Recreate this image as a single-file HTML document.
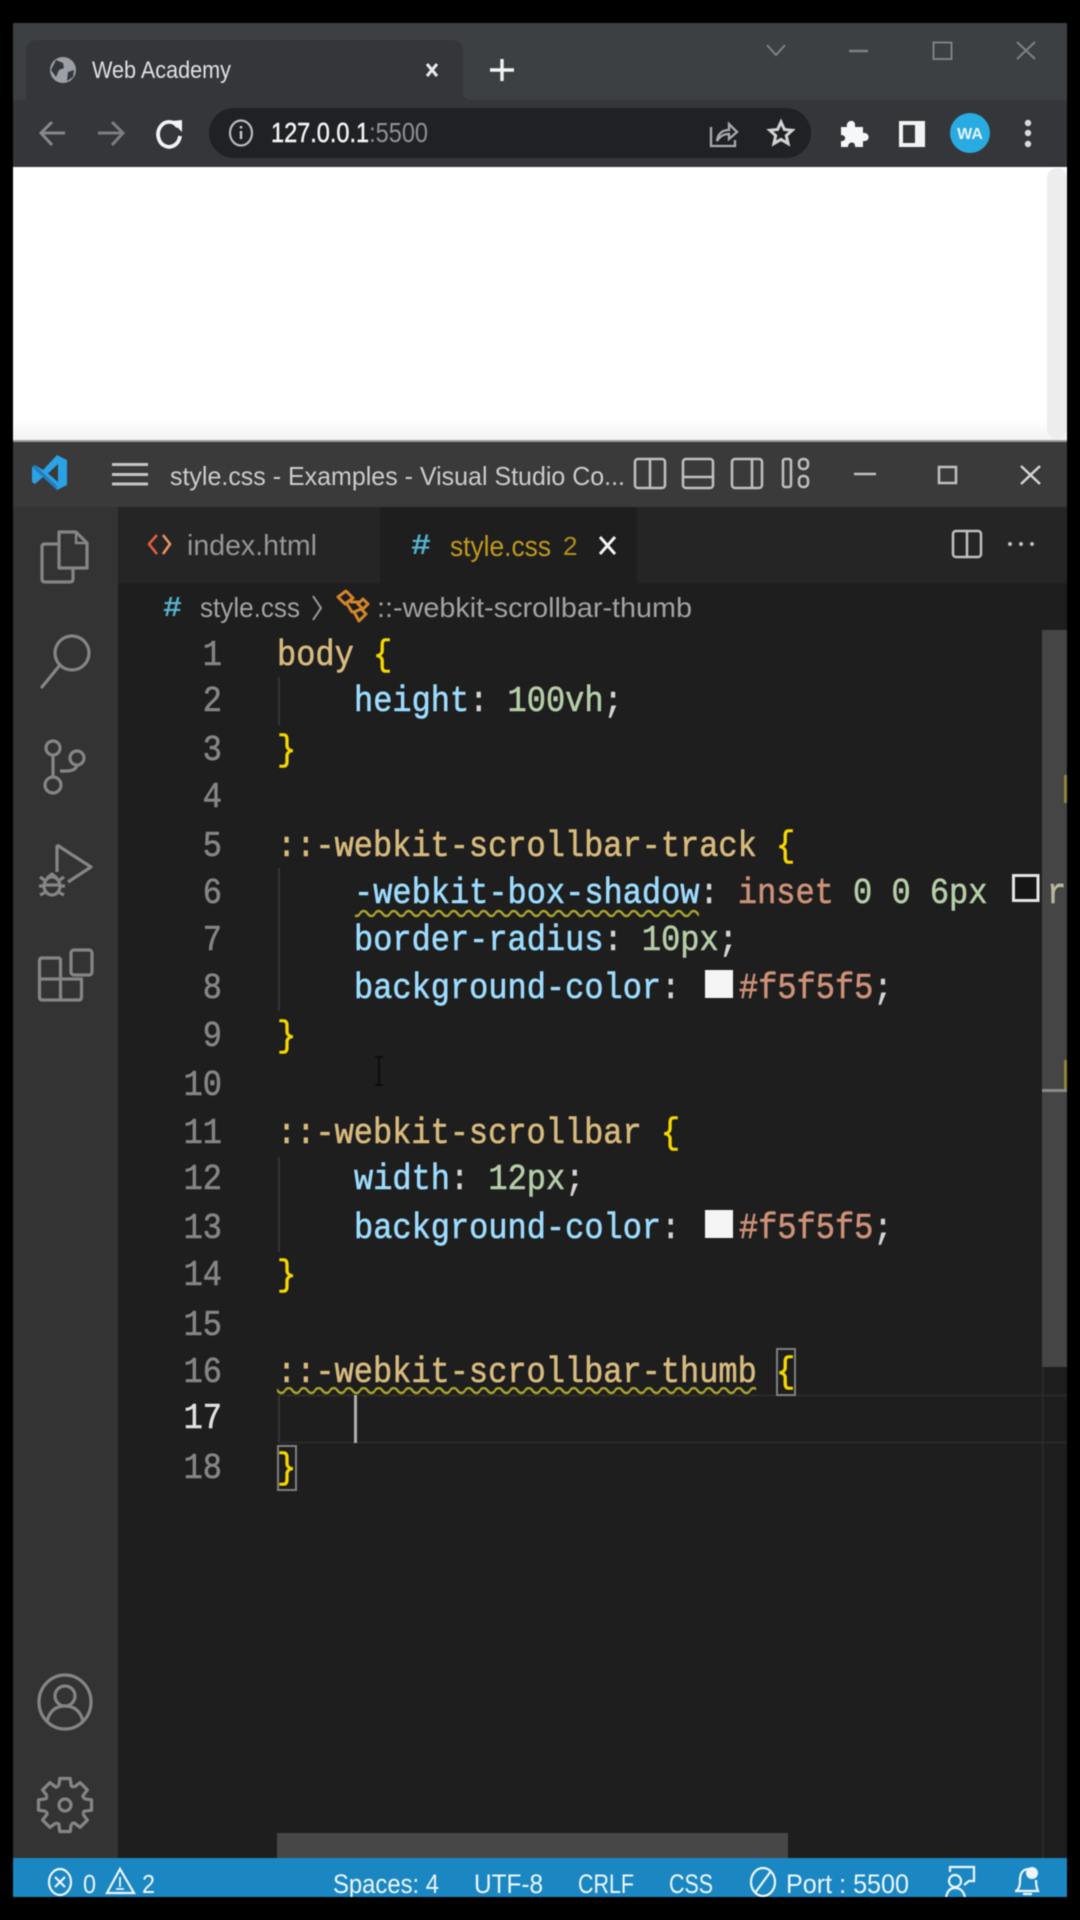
<!DOCTYPE html>
<html><head><meta charset="utf-8"><title>Web Academy</title>
<style>
html,body{margin:0;padding:0;background:#000;width:1080px;height:1920px;overflow:hidden}
svg{display:block;filter:blur(.55px)}
text{font-family:"Liberation Sans",sans-serif}
.c text,text.m{font-family:"Liberation Mono",monospace;font-size:32px;white-space:pre;stroke-width:.55px}
.n{fill:#858585;stroke:#858585;text-anchor:end}
.s{fill:#d7ba7d;stroke:#d7ba7d}.p{fill:#9cdcfe;stroke:#9cdcfe}.v{fill:#b5cea8;stroke:#b5cea8}.b{fill:#f5d800;stroke:#f5d800}.h{fill:#ce9178;stroke:#ce9178}.w{fill:#d4d4d4;stroke:#d4d4d4}
.t{stroke-width:.35px}
</style></head><body>
<svg width="1080" height="1920" viewBox="0 0 1080 1920" xmlns="http://www.w3.org/2000/svg">
<defs>
<pattern id="sq" width="15" height="9" patternUnits="userSpaceOnUse"><path d="M-1 5.500C2 1 5 1 7.500 4.500C10 8 13 8 16 3.500" fill="none" stroke="#aaa52c" stroke-width="2.400"/></pattern>
<clipPath id="ed"><rect x="118" y="507" width="949" height="1351"/></clipPath>
<clipPath id="st"><rect x="13" y="1858" width="1054" height="39"/></clipPath>
<linearGradient id="pg" x1="0" y1="0" x2="0" y2="1"><stop offset="0" stop-color="#fff"/><stop offset="1" stop-color="#f2f2f2"/></linearGradient>
</defs>
<rect width="1080" height="1920" fill="#000"/>

<!-- Chrome -->
<rect x="13" y="23" width="1054" height="78" fill="#3c4043"/>
<path d="M26 100V52q0-12 12-12H451q12 0 12 12V92q0 8 10 8Z" fill="#35363a"/>
<rect x="13" y="100" width="1054" height="67" fill="#35363a"/>
<circle cx="63" cy="70" r="13" fill="#9aa0a6"/>
<path d="M56 60l7 3 1 5-5 2-3 7-5-7zM68 72l6-2-1 7-6 4z" fill="#35363a"/>
<text x="92" y="78" font-size="24" fill="#dfe1e5" textLength="139" lengthAdjust="spacingAndGlyphs">Web Academy</text>
<path d="M427 64l10 12M437 64l-10 12" stroke="#e8eaed" stroke-width="3" fill="none"/>
<path d="M502 59v22M490 70h24" stroke="#f1f3f4" stroke-width="3.400" fill="none"/>
<g stroke="#7d8185" fill="none" stroke-width="2">
<path d="M767 45l9 10 9-10"/><path d="M849 51h19" stroke-width="2.500"/><rect x="933.500" y="42.500" width="18" height="16.500"/><path d="M1017 42l18 17M1035 42l-18 17"/>
</g>
<g stroke="#84878b" fill="none" stroke-width="3">
<path d="M65 133H42M52 122L41 133L52 145"/><path d="M98 133H122M112 122L123 133L112 145" stroke="#7a7d81"/>
</g>
<path d="M178 127a11 12.500 0 1 0 2 9" fill="none" stroke="#f1f3f4" stroke-width="3.800"/><path d="M171 121l11-1v12z" fill="#f1f3f4"/>
<rect x="209" y="108" width="602" height="50" rx="25" fill="#202124"/>
<ellipse cx="241" cy="133" rx="11" ry="12.500" fill="none" stroke="#b8babd" stroke-width="2.200"/><path d="M241 131v8M241 126v2.500" stroke="#c8cacc" stroke-width="2.400"/>
<text x="271" y="142" font-size="28" textLength="157" lengthAdjust="spacingAndGlyphs"><tspan fill="#f1f3f4" stroke="#f1f3f4" stroke-width=".5">127.0.0.1</tspan><tspan fill="#8e9194">:5500</tspan></text>
<g fill="none" stroke="#a8abae" stroke-width="2.300">
<path d="M711 127v19h24v-6"/><path d="M717 141c1-8 6-11 12-11v-6l8 8-8 7v-5c-5 0-9 2-12 7z"/>
<path d="M781 122l3.400 7.500 7.800.8-5.900 5.300 1.800 8-7.100-4.200-7.100 4.200 1.800-8-5.900-5.300 7.800-.8z" stroke="#d0d2d4" stroke-width="3"/>
</g>
<path d="M843 129h6c-2-7 9-9 8-1l0 1h8v6c7-1 8 9 0 8v6h-8c1-6-7-6-7 0h-7v-6c5 1 6-6 0-6z" fill="#f6f7f8" transform="translate(-2,-2)"/>
<rect x="899" y="121" width="26" height="26" fill="#f1f3f4"/><rect x="903" y="125" width="12" height="18" fill="#35363a"/>
<circle cx="970" cy="133" r="20" fill="#29abe2"/>
<text x="970" y="139" font-size="16" font-weight="700" fill="#e8f5fb" text-anchor="middle">WA</text>
<g fill="#d8dadc"><circle cx="1028" cy="123" r="3.200"/><circle cx="1028" cy="133" r="3.200"/><circle cx="1028" cy="144" r="3.200"/></g>

<!-- page -->
<rect x="13" y="167" width="1054" height="274" fill="#fff"/>
<rect x="13" y="420" width="1054" height="21" fill="url(#pg)"/>
<rect x="1047" y="168" width="20" height="271" rx="10" fill="#ededed"/>
<rect x="13" y="440" width="1054" height="2" fill="#9a9a9a"/>

<!-- VS Code frame -->
<rect x="13" y="442" width="1054" height="65" fill="#3a3a3a"/>
<rect x="13" y="507" width="105" height="1351" fill="#333333"/>
<rect x="118" y="507" width="949" height="76" fill="#252526"/>
<rect x="118" y="583" width="949" height="1275" fill="#1e1e1e"/>
<rect x="380" y="507" width="257" height="76" fill="#1e1e1e"/>

<!-- title bar -->
<path d="M57 455L67 460V485L57 490L43 477L35 484L32 482V467L35 465L43 470Z" fill="#2aa2e3"/>
<path d="M58 464L48 473.500L58 482Z" fill="#3a3a3a"/>
<path d="M32 467L35 465L57 486V490Z" fill="#1f7fc0"/>
<path d="M112 464.500h36M112 474.500h36M112 484h36" stroke="#c5c5c5" stroke-width="3"/>
<text x="170" y="485" font-size="26" fill="#cccccc" textLength="455" lengthAdjust="spacingAndGlyphs">style.css - Examples - Visual Studio Co...</text>
<g fill="none" stroke="#c0c0c0" stroke-width="2.500">
<rect x="635" y="459" width="30" height="29" rx="3"/><path d="M650 459v29"/>
<rect x="683" y="459" width="30" height="29" rx="3"/><path d="M683 477h30"/>
<rect x="732" y="459" width="30" height="29" rx="3"/><path d="M752 459v29"/>
<rect x="783" y="459" width="8" height="28" rx="2"/><rect x="799" y="459" width="9" height="10" rx="4"/><rect x="799" y="476" width="9" height="11" rx="4"/>
<path d="M854 474h22"/><rect x="939" y="467" width="17" height="16"/><path d="M1021 466l19 18M1040 466l-19 18" stroke="#d4d4d4"/>
</g>

<!-- tabs -->
<path d="M157 535l-8 9 8 10" fill="none" stroke="#e2603c" stroke-width="2.600"/><path d="M163 535l7 9-7 10" fill="none" stroke="#e8955f" stroke-width="2.600"/>
<text x="187" y="555" font-size="29" fill="#979797" textLength="130" lengthAdjust="spacingAndGlyphs">index.html</text>
<text x="411" y="554" font-size="30" font-weight="700" fill="#55b4cf" textLength="20" lengthAdjust="spacingAndGlyphs" style="font-family:'Liberation Mono',monospace">#</text>
<text x="450" y="556" font-size="29" fill="#c29a1d" textLength="101" lengthAdjust="spacingAndGlyphs">style.css</text>
<text x="563" y="555" font-size="26" fill="#b38f1c">2</text>
<path d="M600 537l15 17M615 537l-15 17" stroke="#f2f2f2" stroke-width="3" fill="none"/>
<rect x="953" y="531" width="28" height="26" rx="3" fill="none" stroke="#c0c0c0" stroke-width="2.500"/><path d="M967 531v26" stroke="#c0c0c0" stroke-width="2.500"/>
<g fill="#c0c0c0"><circle cx="1010" cy="544" r="2"/><circle cx="1021" cy="544" r="2"/><circle cx="1032" cy="544" r="2"/></g>

<!-- breadcrumbs -->
<text x="163" y="616" font-size="29" font-weight="700" fill="#55b4cf" textLength="19" lengthAdjust="spacingAndGlyphs" style="font-family:'Liberation Mono',monospace">#</text>
<text x="200" y="617" font-size="28" fill="#a3a3a3" textLength="100" lengthAdjust="spacingAndGlyphs">style.css</text>
<path d="M313 596l8 12-8 12" fill="none" stroke="#9a9a9a" stroke-width="2"/>
<g fill="none" stroke="#d4852b" stroke-width="3" stroke-linejoin="round">
<path d="M338 597L346 591L353 598L345 604Z"/><path d="M358 604L363 599L368 604L363 609Z"/><path d="M350 602H359M347 604L352 612H356"/><path d="M354 612L361 609L366 614L359 621Z"/>
</g>
<text x="377" y="617" font-size="28" fill="#a3a3a3" textLength="315" lengthAdjust="spacingAndGlyphs">::-webkit-scrollbar-thumb</text>

<!-- scrollbars / rulers -->
<rect x="1042" y="630" width="25" height="737" fill="#454545"/>
<rect x="1042" y="1367" width="1.500" height="491" fill="#2c2c2c"/>
<rect x="1064" y="775" width="3" height="28" fill="#8f8436"/>
<rect x="1064" y="1060" width="3" height="29" fill="#8f8436"/>
<rect x="1042" y="1089" width="25" height="3" fill="#8a8a8a"/>
<rect x="277" y="1833" width="511" height="25" fill="#474747"/>

<!-- current line -->
<path d="M279 1395.500H1067M279 1442.500H1067" stroke="#292929" stroke-width="2"/>
<!-- indent guides -->
<path d="M279 677V725M279 868V1011M279 1157V1252M279 1395V1443" stroke="#3c3c3c" stroke-width="1.500"/>

<!-- line numbers -->
<g class="c">
<text class="n" transform="translate(222,665) scale(1,1.130)">1</text>
<text class="n" transform="translate(222,711) scale(1,1.130)">2</text>
<text class="n" transform="translate(222,760) scale(1,1.130)">3</text>
<text class="n" transform="translate(222,807) scale(1,1.130)">4</text>
<text class="n" transform="translate(222,856) scale(1,1.130)">5</text>
<text class="n" transform="translate(222,903) scale(1,1.130)">6</text>
<text class="n" transform="translate(222,950) scale(1,1.130)">7</text>
<text class="n" transform="translate(222,998) scale(1,1.130)">8</text>
<text class="n" transform="translate(222,1046) scale(1,1.130)">9</text>
<text class="n" transform="translate(222,1095) scale(1,1.130)">10</text>
<text class="n" transform="translate(222,1143) scale(1,1.130)">11</text>
<text class="n" transform="translate(222,1189) scale(1,1.130)">12</text>
<text class="n" transform="translate(222,1238) scale(1,1.130)">13</text>
<text class="n" transform="translate(222,1285) scale(1,1.130)">14</text>
<text class="n" transform="translate(222,1335) scale(1,1.130)">15</text>
<text class="n" transform="translate(222,1382) scale(1,1.130)">16</text>
<text class="n" transform="translate(222,1428) scale(1,1.130)" style="fill:#e0e0e0;stroke:#e0e0e0">17</text>
<text class="n" transform="translate(222,1478) scale(1,1.130)">18</text>
</g>

<!-- code -->
<g class="c" clip-path="url(#ed)">
<text transform="translate(277,665) scale(1,1.130)"><tspan class="s">body</tspan> <tspan class="b">{</tspan></text>
<text transform="translate(354,711) scale(1,1.130)"><tspan class="p">height</tspan><tspan class="w">: </tspan><tspan class="v">100vh</tspan><tspan class="w">;</tspan></text>
<text transform="translate(277,760) scale(1,1.130)"><tspan class="b">}</tspan></text>
<text transform="translate(277,856) scale(1,1.130)"><tspan class="s">::-webkit-scrollbar-track</tspan> <tspan class="b">{</tspan></text>
<text transform="translate(354,903) scale(1,1.130)"><tspan class="p">-webkit-box-shadow</tspan><tspan class="w">: </tspan><tspan class="h">inset</tspan> <tspan class="v">0</tspan> <tspan class="v">0</tspan> <tspan class="v">6px</tspan></text>
<text transform="translate(1047,903) scale(1,1.130)" fill="#b9b5a0" stroke="#b9b5a0">r</text>
<text transform="translate(354,950) scale(1,1.130)"><tspan class="p">border-radius</tspan><tspan class="w">: </tspan><tspan class="v">10px</tspan><tspan class="w">;</tspan></text>
<text transform="translate(354,998) scale(1,1.130)"><tspan class="p">background-color</tspan><tspan class="w">:</tspan></text>
<text transform="translate(739,998) scale(1,1.130)"><tspan class="h">#f5f5f5</tspan><tspan class="w">;</tspan></text>
<text transform="translate(277,1046) scale(1,1.130)"><tspan class="b">}</tspan></text>
<text transform="translate(277,1143) scale(1,1.130)"><tspan class="s">::-webkit-scrollbar</tspan> <tspan class="b">{</tspan></text>
<text transform="translate(354,1189) scale(1,1.130)"><tspan class="p">width</tspan><tspan class="w">: </tspan><tspan class="v">12px</tspan><tspan class="w">;</tspan></text>
<text transform="translate(354,1238) scale(1,1.130)"><tspan class="p">background-color</tspan><tspan class="w">:</tspan></text>
<text transform="translate(739,1238) scale(1,1.130)"><tspan class="h">#f5f5f5</tspan><tspan class="w">;</tspan></text>
<text transform="translate(277,1285) scale(1,1.130)"><tspan class="b">}</tspan></text>
<text transform="translate(277,1382) scale(1,1.130)"><tspan class="s">::-webkit-scrollbar-thumb</tspan> <tspan class="b">{</tspan></text>
<text transform="translate(277,1478) scale(1,1.130)"><tspan class="b">}</tspan></text>
</g>

<!-- swatches -->
<rect x="1013.500" y="875.500" width="24.500" height="25" fill="#151515" stroke="#e4e4e4" stroke-width="3"/>
<rect x="705" y="970" width="28" height="28" fill="#f5f5f5"/>
<rect x="705" y="1210" width="28" height="28" fill="#f5f5f5"/>
<!-- squiggles -->
<rect x="355" y="909" width="344" height="9" fill="url(#sq)"/>
<rect x="277" y="1387" width="479" height="9" fill="url(#sq)"/>
<!-- bracket highlights -->
<rect x="777" y="1349" width="18" height="46" fill="none" stroke="#7f7f7f" stroke-width="2"/>
<rect x="278" y="1446" width="18" height="44" fill="none" stroke="#7f7f7f" stroke-width="2"/>
<!-- caret -->
<rect x="354" y="1395" width="3" height="48" fill="#aeafad"/>
<!-- ibeam -->
<path d="M379 1058v27M375 1057h8M375 1085h8" stroke="#0c0c0c" stroke-width="2" fill="none"/>

<!-- activity bar icons -->
<g fill="none" stroke="#858585" stroke-width="3.200" stroke-linejoin="round">
<path d="M59 532H76L87 543V568H59Z"/><path d="M76 532V543H87" stroke-width="2.500"/>
<path d="M59 544H45Q42 544 42 547V579Q42 582 45 582H70Q73 582 73 579V568"/>
<circle cx="72" cy="653" r="17"/><path d="M60 665L42 687" stroke-linecap="round"/>
<circle cx="53" cy="748" r="7"/><circle cx="53" cy="785" r="8"/><circle cx="77" cy="758" r="7"/>
<path d="M53 755V777M60 771H66Q76 771 77 765"/>
<path d="M57 845V872M57 845L91 867L68 882"/>
<ellipse cx="52" cy="886" rx="8" ry="9"/><path d="M40 877l6 4M64 877l-6 4M39 886h5M65 886h-5M40 895l6-3M64 895l-6-3M47 878l5-4l5 4M44 885h16"/>
<path d="M60.500 958H42Q39.500 958 39.500 961V997Q39.500 1000 42 1000H79Q81.500 1000 81.500 997V979H39.500M60.500 958V1000"/>
<rect x="71" y="950" width="21" height="25" rx="3"/>
<ellipse cx="65" cy="1702" rx="26" ry="27"/><circle cx="65" cy="1696" r="10"/><path d="M47 1722c2-11 9-16 18-16s16 5 18 16"/>
<circle cx="65" cy="1805" r="6"/>
<g transform="translate(65,1805)">
<path d="M-6.200-19L-5.200-26.500L5.200-26.500L6.200-19L9.100-17.800"/>
<path transform="rotate(45)" d="M-6.200-19L-5.200-26.500L5.200-26.500L6.200-19L9.100-17.800"/>
<path transform="rotate(90)" d="M-6.200-19L-5.200-26.500L5.200-26.500L6.200-19L9.100-17.800"/>
<path transform="rotate(135)" d="M-6.200-19L-5.200-26.500L5.200-26.500L6.200-19L9.100-17.800"/>
<path transform="rotate(180)" d="M-6.200-19L-5.200-26.500L5.200-26.500L6.200-19L9.100-17.800"/>
<path transform="rotate(225)" d="M-6.200-19L-5.200-26.500L5.200-26.500L6.200-19L9.100-17.800"/>
<path transform="rotate(270)" d="M-6.200-19L-5.200-26.500L5.200-26.500L6.200-19L9.100-17.800"/>
<path transform="rotate(315)" d="M-6.200-19L-5.200-26.500L5.200-26.500L6.200-19L9.100-17.800"/>
</g>
</g>

<!-- status bar -->
<rect x="13" y="1858" width="1054" height="39" fill="#1a87c3"/>
<g clip-path="url(#st)" fill="#eef6fb">
<g fill="none" stroke="#eef6fb" stroke-width="2.200">
<ellipse cx="60" cy="1882" rx="11" ry="13"/><path d="M55 1877l10 10M65 1877l-10 10"/>
<path d="M120 1869L134 1893H107Z"/><path d="M120 1877v10M116 1889h8" stroke-width="1.800"/>
<ellipse cx="763" cy="1882" rx="12" ry="14"/><path d="M755 1893L771 1871"/>
<circle cx="955" cy="1881" r="6"/><path d="M946 1898c1-7 4-10 9-10s9 3 10 10"/><path d="M950 1872v-5h24v14h-5l-5 4"/>
<path d="M1016 1891c3-2 4-5 4-11c0-7 3-11 9-11"/><path d="M1036 1880c0 6 1 9 2 11H1015M1023 1894h9"/>
</g>
<circle cx="1032" cy="1873" r="6"/>
<text x="83" y="1893" font-size="26" textLength="13" lengthAdjust="spacingAndGlyphs">0</text>
<text x="142" y="1893" font-size="26" textLength="13" lengthAdjust="spacingAndGlyphs">2</text>
<text x="333" y="1893" font-size="27" textLength="106" lengthAdjust="spacingAndGlyphs">Spaces: 4</text>
<text x="474" y="1893" font-size="27" textLength="69" lengthAdjust="spacingAndGlyphs">UTF-8</text>
<text x="578" y="1893" font-size="27" textLength="56" lengthAdjust="spacingAndGlyphs">CRLF</text>
<text x="669" y="1893" font-size="27" textLength="44" lengthAdjust="spacingAndGlyphs">CSS</text>
<text x="786" y="1893" font-size="27" textLength="123" lengthAdjust="spacingAndGlyphs">Port : 5500</text>
</g>
</svg>
</body></html>
